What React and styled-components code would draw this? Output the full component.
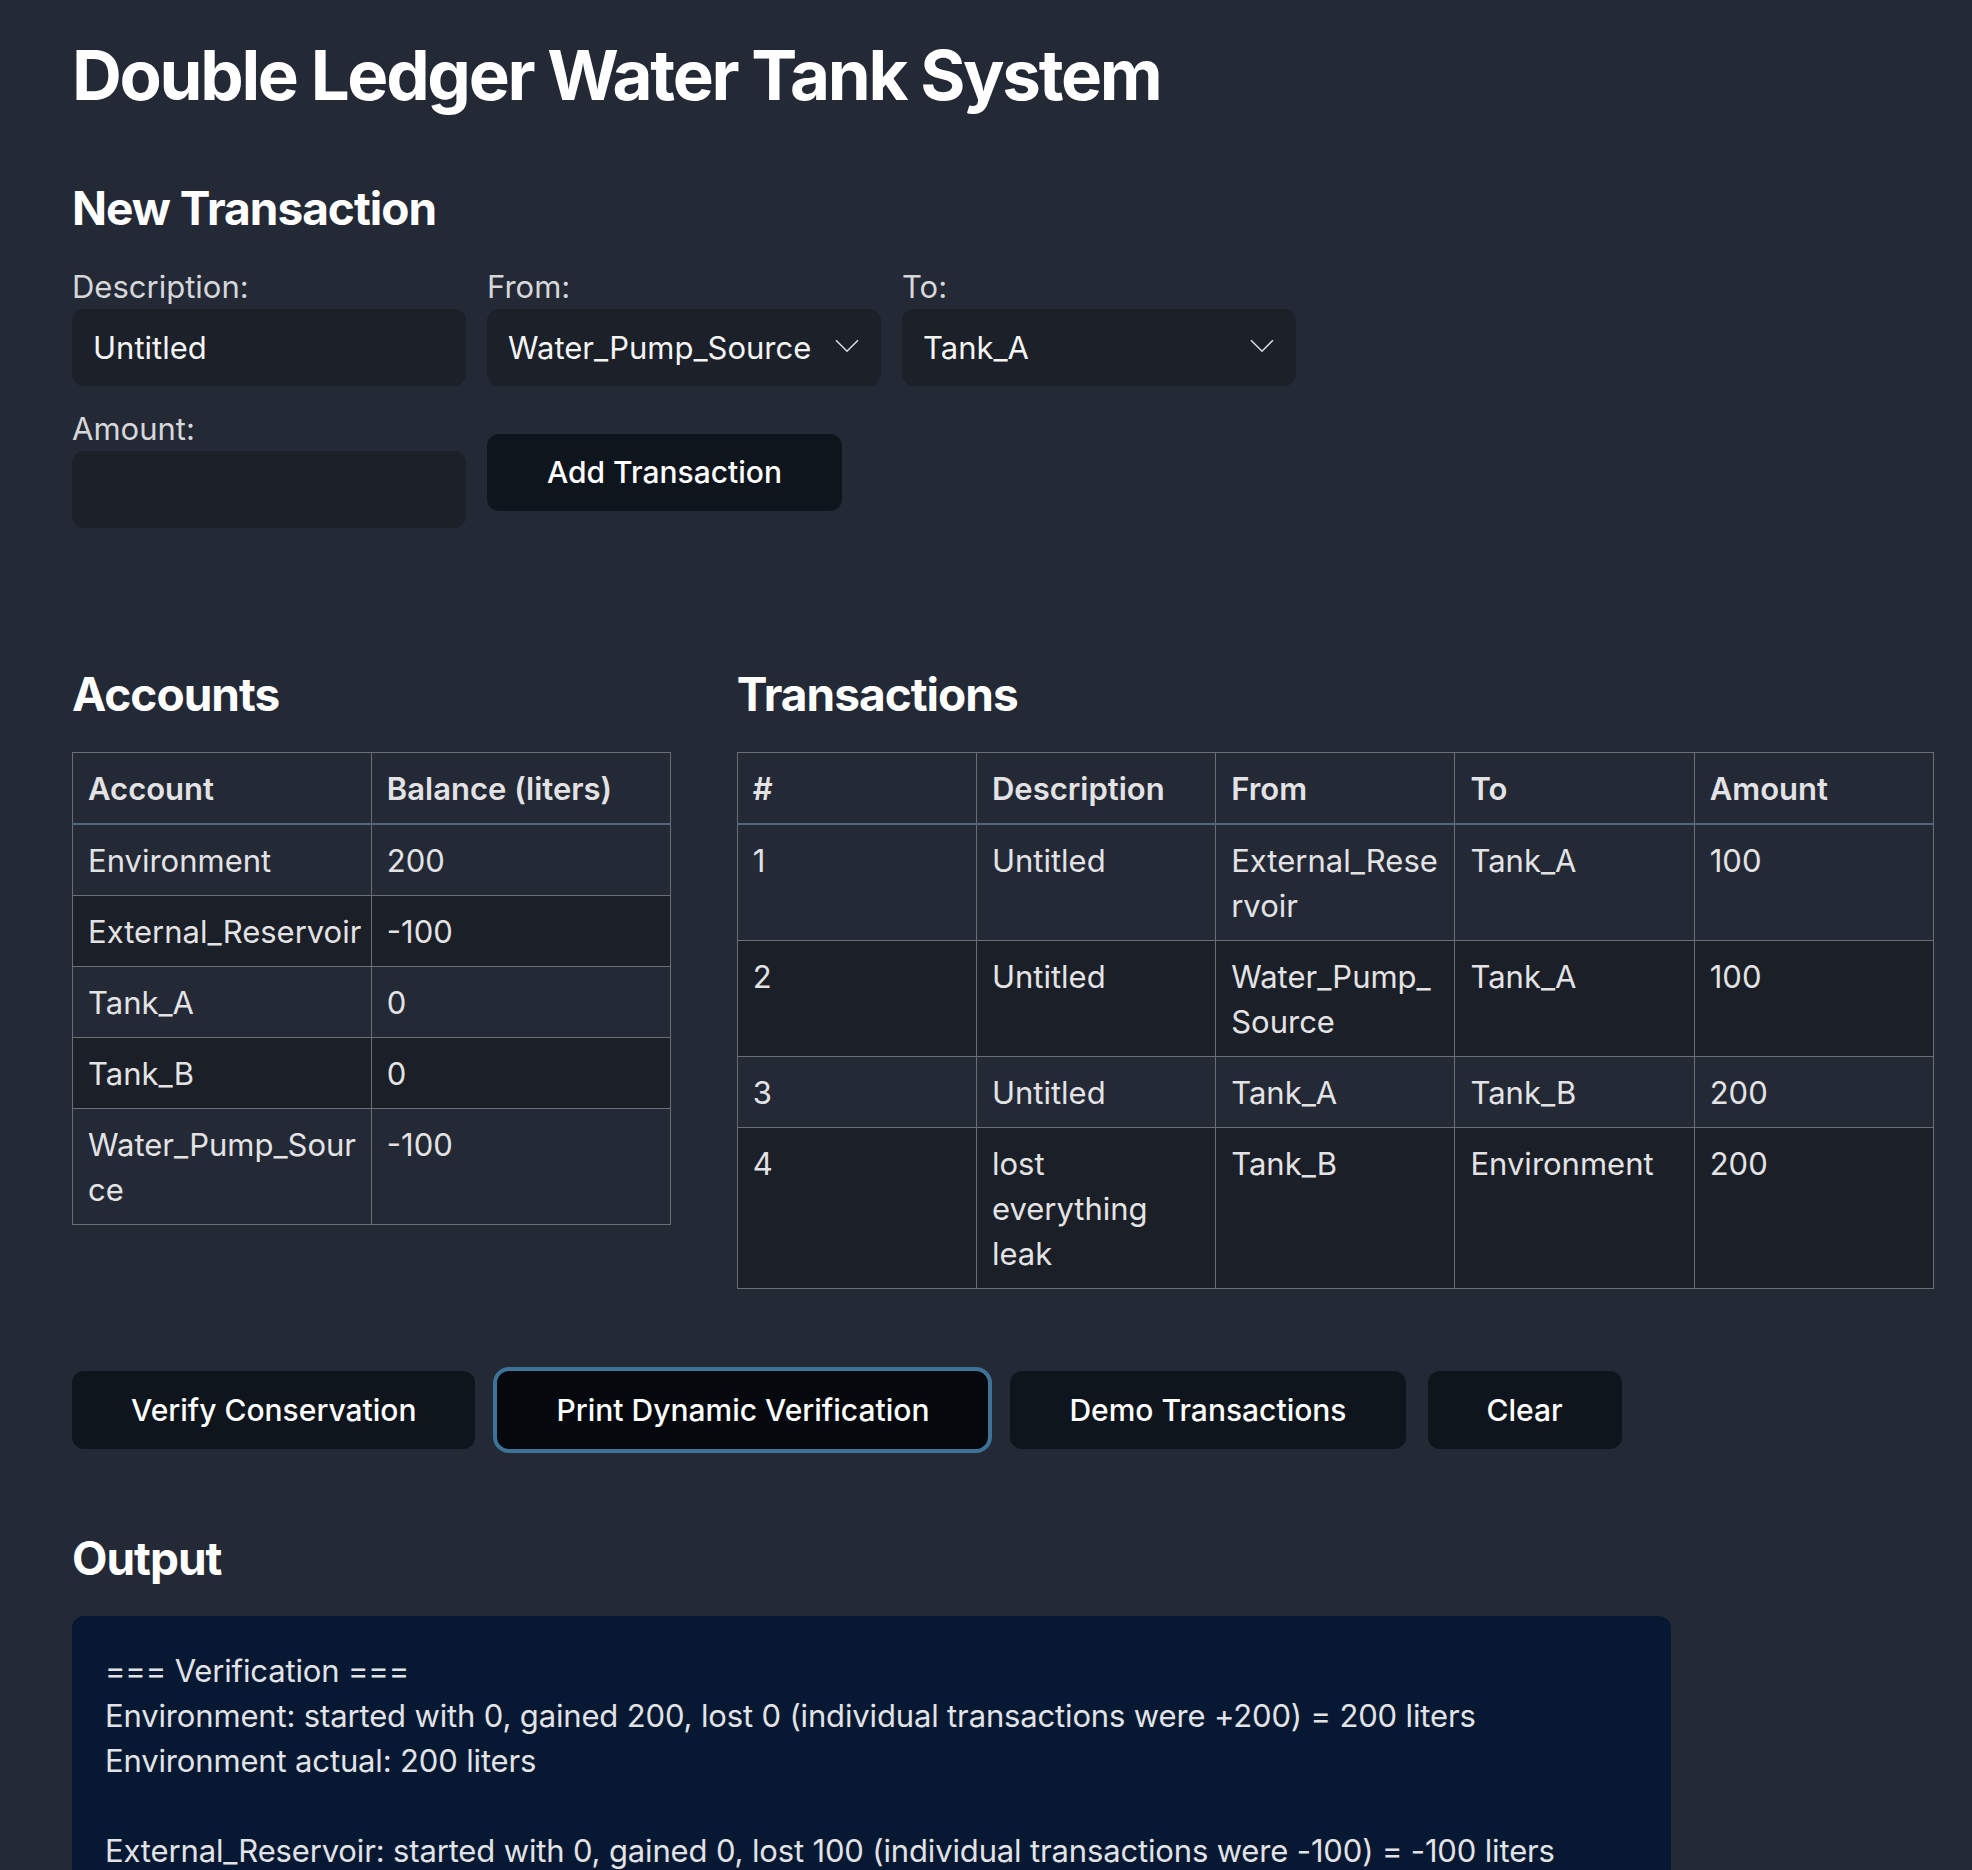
import React from "react";
import styled, { createGlobalStyle } from "styled-components";

const GlobalStyle = createGlobalStyle`
  body {
    margin: 0;
    background: #242936;
    color: #e4e4e4;
    font-family: Inter, "Noto Sans", sans-serif;
    font-size: 31px;
    line-height: 45px;
  }
`;

const accounts = [
  { name: "Environment", balance: 200 },
  { name: "External_Reservoir", balance: -100 },
  { name: "Tank_A", balance: 0 },
  { name: "Tank_B", balance: 0 },
  { name: "Water_Pump_Source", balance: -100 },
];

const transactions = [
  { id: 1, desc: "Untitled", from: "External_Reservoir", to: "Tank_A", amount: 100 },
  { id: 2, desc: "Untitled", from: "Water_Pump_Source", to: "Tank_A", amount: 100 },
  { id: 3, desc: "Untitled", from: "Tank_A", to: "Tank_B", amount: 200 },
  { id: 4, desc: "lost everything leak", from: "Tank_B", to: "Environment", amount: 200 },
];

const output = `=== Verification ===
Environment: started with 0, gained 200, lost 0 (individual transactions were +200) = 200 liters
Environment actual: 200 liters

External_Reservoir: started with 0, gained 0, lost 100 (individual transactions were -100) = -100 liters
External_Reservoir actual: -100 liters

Tank_A: started with 0, gained 200, lost 200 (individual transactions were +100, +100, -200) = 0 liters
Tank_A actual: 0 liters

Tank_B: started with 0, gained 200, lost 200 (individual transactions were +200, -200) = 0 liters
Tank_B actual: 0 liters

Water_Pump_Source: started with 0, gained 0, lost 100 (individual transactions were -100) = -100 liters
Water_Pump_Source actual: -100 liters`;

const Chevron = () => (
  <svg width="24" height="13" viewBox="0 0 24 13" fill="none">
    <polyline points="1,1 12,12 23,1" stroke="#d9dbe0" strokeWidth="1.6" />
  </svg>
);

const App = () => {
  return (
    <Page>
      <GlobalStyle />
      <Title>Double Ledger Water Tank System</Title>

      <SubTitle>New Transaction</SubTitle>
      <FormGrid>
        <Field>
          <Label>Description:</Label>
          <TextInput defaultValue="Untitled" />
        </Field>
        <Field>
          <Label>From:</Label>
          <SelectWrap>
            <Select defaultValue="Water_Pump_Source">
              {accounts.map((a) => (
                <option key={a.name}>{a.name}</option>
              ))}
            </Select>
            <ChevronSlot>
              <Chevron />
            </ChevronSlot>
          </SelectWrap>
        </Field>
        <Field>
          <Label>To:</Label>
          <SelectWrap>
            <Select defaultValue="Tank_A">
              {accounts.map((a) => (
                <option key={a.name}>{a.name}</option>
              ))}
            </Select>
            <ChevronSlot>
              <Chevron />
            </ChevronSlot>
          </SelectWrap>
        </Field>
        <Field>
          <Label>Amount:</Label>
          <TextInput type="number" />
        </Field>
        <AddButton>Add Transaction</AddButton>
      </FormGrid>

      <Sections>
        <section>
          <SectionTitle>Accounts</SectionTitle>
          <Table $padRight={6}>
            <thead>
              <tr>
                <th>Account</th>
                <th>Balance (liters)</th>
              </tr>
            </thead>
            <tbody>
              {accounts.map((a) => (
                <tr key={a.name}>
                  <td>{a.name}</td>
                  <td>{a.balance}</td>
                </tr>
              ))}
            </tbody>
          </Table>
        </section>
        <section>
          <SectionTitle>Transactions</SectionTitle>
          <Table $padRight={11}>
            <thead>
              <tr>
                <th>#</th>
                <th>Description</th>
                <th>From</th>
                <th>To</th>
                <th>Amount</th>
              </tr>
            </thead>
            <tbody>
              {transactions.map((t) => (
                <tr key={t.id}>
                  <td>{t.id}</td>
                  <td>{t.desc}</td>
                  <td>{t.from}</td>
                  <td>{t.to}</td>
                  <td>{t.amount}</td>
                </tr>
              ))}
            </tbody>
          </Table>
        </section>
      </Sections>

      <ButtonRow>
        <ActionButton>Verify Conservation</ActionButton>
        <ActionButton $focused>Print Dynamic Verification</ActionButton>
        <ActionButton>Demo Transactions</ActionButton>
        <ActionButton>Clear</ActionButton>
      </ButtonRow>

      <OutputTitle>Output</OutputTitle>
      <OutputBox>{output}</OutputBox>
    </Page>
  );
};

export default App;

const Page = styled.div`
  padding: 34px 38px 80px 72px;
`;

const Title = styled.h1`
  margin: 0;
  font-size: 69px;
  line-height: 1.2;
  font-weight: 700;
  letter-spacing: -2.3px;
  color: #ffffff;
`;

const SubTitle = styled.h3`
  margin: 64px 0 0;
  font-size: 46px;
  line-height: 1.2;
  font-weight: 700;
  letter-spacing: -1px;
  color: #ffffff;
`;

const FormGrid = styled.div`
  margin-top: 28px;
  display: grid;
  grid-template-columns: repeat(3, 394px);
  column-gap: 21px;
  row-gap: 20px;
`;

const Field = styled.div`
  display: flex;
  flex-direction: column;
`;

const Label = styled.label`
  color: #d6d7da;
`;

const TextInput = styled.input`
  box-sizing: border-box;
  height: 77px;
  width: 100%;
  padding: 0 21px;
  border: none;
  border-radius: 12px;
  background: #1b2029;
  color: #f4f4f4;
  font: inherit;
  outline: none;

  &::-webkit-inner-spin-button {
    display: none;
  }
`;

const SelectWrap = styled.div`
  position: relative;
`;

const Select = styled.select`
  box-sizing: border-box;
  height: 77px;
  width: 100%;
  padding: 0 21px;
  border: none;
  border-radius: 12px;
  background: #1b2029;
  color: #f4f4f4;
  font: inherit;
  appearance: none;
  outline: none;
`;

const ChevronSlot = styled.span`
  position: absolute;
  right: 22px;
  top: 50%;
  transform: translateY(-60%);
  display: flex;
  pointer-events: none;
`;

const AddButton = styled.button`
  justify-self: start;
  align-self: start;
  margin-top: 28px;
  height: 77px;
  padding: 0 60px;
  border: none;
  border-radius: 12px;
  background: #0f151c;
  color: #ffffff;
  font: inherit;
  font-size: 30px;
  font-weight: 500;
  cursor: pointer;
`;

const Sections = styled.div`
  margin-top: 139px;
  display: grid;
  grid-template-columns: 1fr 2fr;
  column-gap: 66px;
  align-items: start;
`;

const SectionTitle = styled.h2`
  margin: 0 0 30px;
  font-size: 46px;
  line-height: 1.2;
  font-weight: 700;
  letter-spacing: -1px;
  color: #ffffff;
`;

const Table = styled.table`
  width: 100%;
  border-collapse: collapse;
  table-layout: fixed;

  th,
  td {
    border: 1px solid #6b6e73;
    padding: 12.5px ${({ $padRight }) => $padRight}px 12.5px 15px;
    text-align: left;
    vertical-align: top;
    overflow-wrap: anywhere;
    color: #e3e3e5;
  }

  th {
    font-weight: 600;
    border-bottom: 2px solid #56657e;
  }

  tbody tr:nth-child(even) {
    background: #1b1f27;
  }
`;

const ButtonRow = styled.div`
  margin-top: 82px;
  display: flex;
  gap: 22px;
`;

const ActionButton = styled.button`
  height: 78px;
  padding: 0 59px;
  border: none;
  border-radius: 12px;
  background: ${({ $focused }) => ($focused ? "#05090d" : "#0f151c")};
  outline: ${({ $focused }) => ($focused ? "4px solid #3d7396" : "none")};
  color: #ffffff;
  font: inherit;
  font-size: 30px;
  font-weight: 500;
  cursor: pointer;
`;

const OutputTitle = styled(SectionTitle)`
  margin: 82px 0 30px;
`;

const OutputBox = styled.pre`
  box-sizing: border-box;
  width: 1599px;
  margin: 0;
  padding: 32px 33px;
  border-radius: 12px;
  background: #071833;
  color: #e2e3e6;
  font: inherit;
  letter-spacing: -0.15px;
  white-space: pre-wrap;
`;
